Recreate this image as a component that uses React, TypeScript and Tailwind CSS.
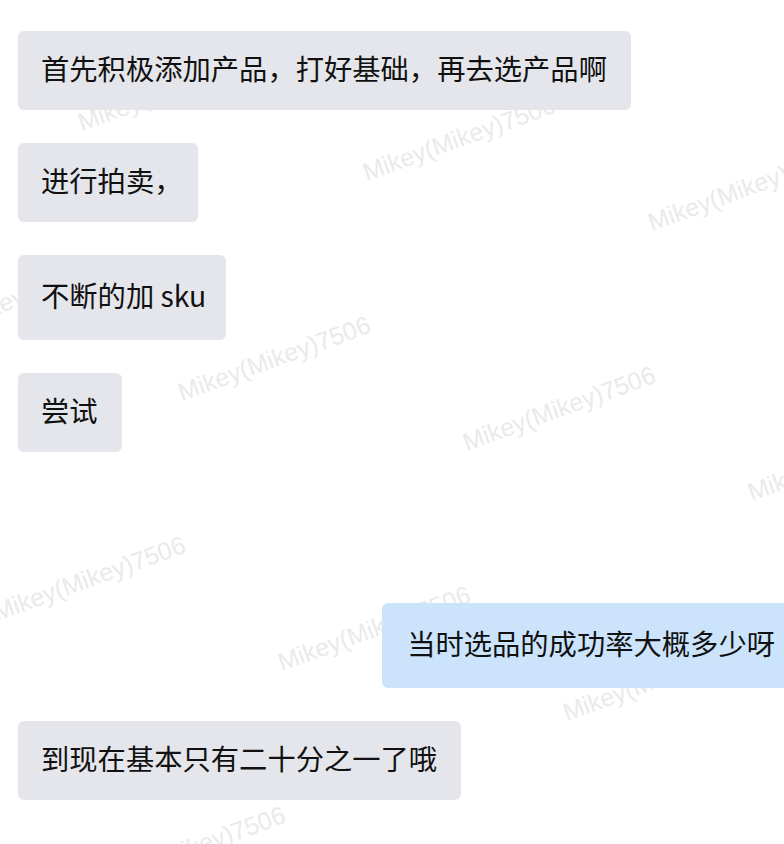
import React from 'react';

type Msg = {
  text: string;
  mine?: boolean;
  tall?: boolean;
  pr?: string;
};

const messages: Msg[] = [
  { text: '首先积极添加产品，打好基础，再去选产品啊' },
  { text: '进行拍卖，', pr: 'pr-[15px]' },
  { text: '不断的加 sku', tall: true, pr: 'pr-[20px]' },
  { text: '尝试' },
  { text: '当时选品的成功率大概多少呀', mine: true, tall: true },
  { text: '到现在基本只有二十分之一了哦' },
];

// watermark lattice: origin + m*v1 + n*v2 (lower-left of text)
const origin = { x: 368, y: 185 };
const v1 = { x: -185, y: 220 };
const v2 = { x: 100, y: 270 };
const lattice: [number, number][] = [
  [1, -1], [2, -1], [0, 0], [-1, 1], [1, 0], [0, 1], [-1, 2],
  [2, 0], [1, 1], [0, 2], [2, 1], [3, 0],
];

const Watermarks = () => (
  <div className="absolute inset-0 pointer-events-none select-none">
    {lattice.map(([m, n], i) => {
      const x = origin.x + m * v1.x + n * v2.x;
      const y = origin.y + m * v1.y + n * v2.y;
      return (
        <span
          key={i}
          className="absolute whitespace-nowrap text-[25px] leading-[25px] text-[#eaeaea] origin-bottom-left -rotate-[20deg] font-['Liberation_Sans',Arial,sans-serif]"
          style={{ left: x, top: y - 25 }}
        >
          Mikey(Mikey)7506
        </span>
      );
    })}
  </div>
);

const Bubble = ({ msg }: { msg: Msg }) => {
  const base = 'relative z-10 rounded-md pl-[23px] leading-[37px] text-[28.3px] text-[#111] whitespace-nowrap';
  const pad = msg.tall ? 'pt-[21px] pb-[27px]' : 'pt-[18px] pb-[24px]';
  if (msg.mine) {
    return (
      <div className={`${base} ${pad} pr-[25px] pl-[25px] self-end mr-[-34px] mt-[118px] bg-[#cce4fb]`}>
        {msg.text}
      </div>
    );
  }
  return (
    <div className={`${base} ${pad} ${msg.pr ?? 'pr-[24px]'} bg-[#e5e6eb]`}>
      {msg.text}
    </div>
  );
};

export default function App() {
  return (
    <div className="relative h-[844px] w-full overflow-hidden bg-white font-['Noto_Sans_CJK_SC','Noto_Sans',sans-serif]">
      <Watermarks />
      <div className="relative flex flex-col items-start gap-[33px] px-[18px] pt-[31px]">
        {messages.map((m, i) => (
          <Bubble key={i} msg={m} />
        ))}
      </div>
    </div>
  );
}
